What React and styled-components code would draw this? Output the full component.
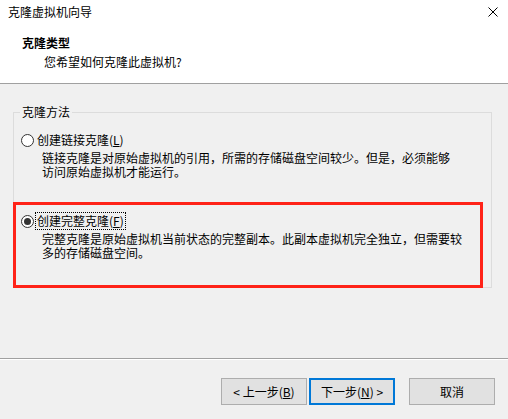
import React from "react";
import styled, { createGlobalStyle } from "styled-components";

const GlobalStyle = createGlobalStyle`
  html, body {
    margin: 0;
    padding: 0;
    background: #f0f0f0;
  }
  body {
    font-family: "Noto Sans CJK SC", "Noto Sans", sans-serif;
    font-size: 12px;
    color: #000;
  }
`;

const Window = styled.div`
  width: 508px;
  height: 419px;
  background: #f0f0f0;
  display: flex;
  flex-direction: column;
  overflow: hidden;
`;

const Header = styled.div`
  height: 84px;
  box-sizing: border-box;
  background: #fff;
  border-bottom: 1px solid #a0a0a0;
`;

const TitleBar = styled.div`
  height: 24px;
  display: flex;
  align-items: center;
  justify-content: space-between;
  padding: 0 10px 0 8px;
  line-height: 16px;
`;

const Heading = styled.div`
  margin-top: 11px;
  padding-left: 22px;
  font-weight: bold;
  line-height: 16px;
`;

const SubHeading = styled.div`
  margin-top: 3px;
  padding-left: 44px;
  line-height: 16px;
`;

const Group = styled.div`
  position: relative;
  margin: 28px 16px 0 13px;
  border: 1px solid #dcdcdc;
  display: flex;
  flex-direction: column;
`;

const Legend = styled.span`
  position: absolute;
  left: 6px;
  top: -9px;
  padding: 0 2px;
  background: #f0f0f0;
  line-height: 16px;
`;

const Option = styled.div`
  margin-top: ${(p) => (p.$highlight ? "23px" : "19px")};
  margin-left: ${(p) => (p.$highlight ? "-1px" : "7px")};
  margin-right: ${(p) => (p.$highlight ? "8px" : "0")};
  margin-bottom: ${(p) => (p.$highlight ? "-1px" : "0")};
  padding: ${(p) => (p.$highlight ? "8px 0 25px 5px" : "0")};
  border: ${(p) => (p.$highlight ? "3px solid #ff2318" : "none")};
`;

const RadioRow = styled.div`
  display: flex;
  align-items: center;
  gap: 2px;
  height: 16px;
`;

const Radio = styled.span`
  width: 13px;
  height: 13px;
  box-sizing: border-box;
  border: 1px solid #333;
  border-radius: 50%;
  background: #fff;
  display: flex;
  align-items: center;
  justify-content: center;
  flex-shrink: 0;

  &::after {
    content: "";
    display: ${(p) => (p.$checked ? "block" : "none")};
    width: 7px;
    height: 7px;
    border-radius: 50%;
    background: #333;
  }
`;

const RadioLabel = styled.span`
  padding: 0 1px;
  line-height: 16px;
  outline: ${(p) => (p.$focused ? "1px dotted #000" : "none")};
  outline-offset: 0;
`;

const Mnemonic = styled.span`
  text-decoration: underline;
`;

const Description = styled.div`
  margin-top: 3px;
  padding-left: 21px;
  line-height: 14px;
  white-space: nowrap;
`;

const Separator = styled.div`
  margin-top: 70px;
  border-top: 1px solid #a0a0a0;
  border-bottom: 1px solid #fff;
`;

const ButtonRow = styled.div`
  margin-top: 18px;
  padding-right: 13px;
  display: flex;
  justify-content: flex-end;
`;

const Button = styled.button`
  width: 86px;
  height: 27px;
  box-sizing: border-box;
  margin-left: ${(p) => p.$gap || 0}px;
  padding: 0;
  background: #e1e1e1;
  border: ${(p) => (p.$default ? "2px solid #0078d7" : "1px solid #adadad")};
  font-family: inherit;
  font-size: 12px;
  color: #000;
  line-height: 16px;
`;

const CloseIcon = () => (
  <svg width="10" height="10" viewBox="0 0 10 10">
    <path d="M0.5 0.5 L9.5 9.5 M9.5 0.5 L0.5 9.5" stroke="#000" strokeWidth="1" />
  </svg>
);

export default function App() {
  return (
    <Window>
      <GlobalStyle />
      <Header>
        <TitleBar>
          <span>克隆虚拟机向导</span>
          <CloseIcon />
        </TitleBar>
        <Heading>克隆类型</Heading>
        <SubHeading>您希望如何克隆此虚拟机?</SubHeading>
      </Header>

      <Group>
        <Legend>克隆方法</Legend>
        <Option>
          <RadioRow>
            <Radio />
            <RadioLabel>
              创建链接克隆(<Mnemonic>L</Mnemonic>)
            </RadioLabel>
          </RadioRow>
          <Description>
            <div>链接克隆是对原始虚拟机的引用，所需的存储磁盘空间较少。但是，必须能够</div>
            <div>访问原始虚拟机才能运行。</div>
          </Description>
        </Option>
        <Option $highlight>
          <RadioRow>
            <Radio $checked />
            <RadioLabel $focused>
              创建完整克隆(<Mnemonic>F</Mnemonic>)
            </RadioLabel>
          </RadioRow>
          <Description>
            <div>完整克隆是原始虚拟机当前状态的完整副本。此副本虚拟机完全独立，但需要较</div>
            <div>多的存储磁盘空间。</div>
          </Description>
        </Option>
      </Group>

      <Separator />
      <ButtonRow>
        <Button>
          &lt; 上一步(<Mnemonic>B</Mnemonic>)
        </Button>
        <Button $default $gap={2}>
          下一步(<Mnemonic>N</Mnemonic>) &gt;
        </Button>
        <Button $gap={14}>取消</Button>
      </ButtonRow>
    </Window>
  );
}
